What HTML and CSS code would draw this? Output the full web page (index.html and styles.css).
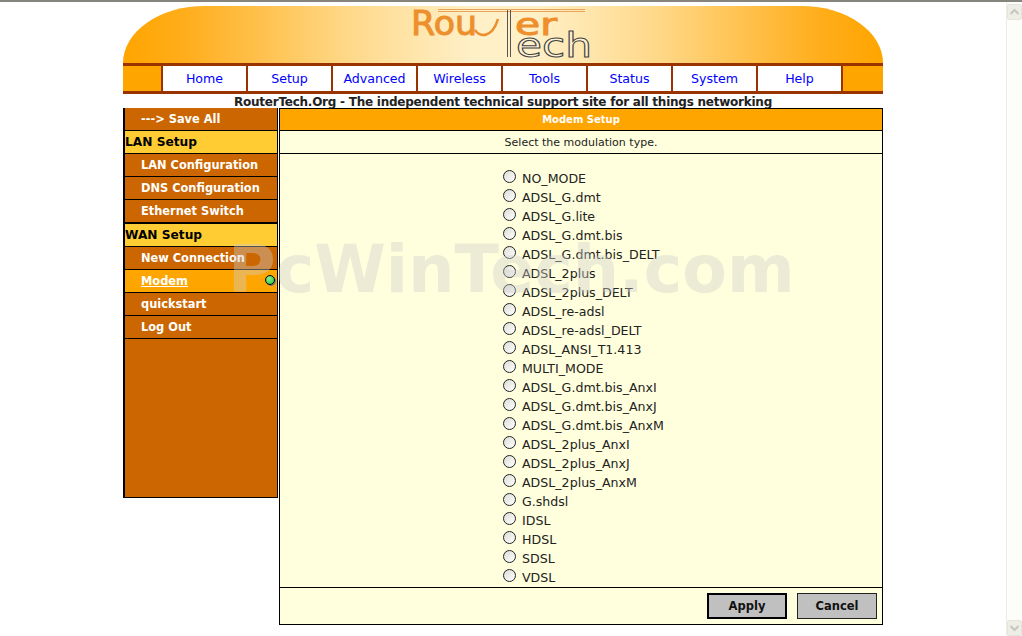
FILE: index.html
```html
<!DOCTYPE html>
<html>
  <head>
    <meta charset="utf-8" />
    <title>RouterTech - Modem Setup</title>
    <link rel="stylesheet" href="styles.css">
  </head>
  <body>
    <div class="window-edge"></div>
    <div class="window">
      <div class="page">
        <header class="banner">
          <svg class="logo" width="190" height="57" viewBox="0 0 190 57" role="img" aria-label="RouterTech">
            <text class="logo-orange" x="3" y="29" textLength="66" lengthAdjust="spacingAndGlyphs">Rou</text>
            <path d="M67 24C71 31 84 33 90 13" fill="none" stroke="#ee8f2d" stroke-width="2.600" />
            <text class="logo-orange small" x="107" y="29" textLength="42" lengthAdjust="spacingAndGlyphs">er</text>
            <rect x="30" y="3" width="147" height="1" fill="#e9a45c" />
            <rect x="30" y="5" width="147" height="1" fill="#e9a45c" />
            <rect x="99" y="4" width="1" height="47" fill="#555" />
            <rect x="102" y="4" width="1" height="47" fill="#555" />
            <text class="logo-dark" x="108" y="51" textLength="76" lengthAdjust="spacingAndGlyphs">ech</text>
          </svg>
        </header>
        <nav class="topnav">
          <span class="topnav-end"></span>
          <a href="#">Home</a>
          <a href="#">Setup</a>
          <a href="#">Advanced</a>
          <a href="#">Wireless</a>
          <a href="#">Tools</a>
          <a href="#">Status</a>
          <a href="#">System</a>
          <a href="#">Help</a>
          <span class="topnav-end last"></span>
        </nav>
        <div class="tagline">RouterTech.Org - The independent technical support site for all things networking</div>
        <div class="columns">
          <aside class="sidebar">
            <a class="side-link" href="#">---&gt; Save All</a>
            <div class="side-head">LAN Setup</div>
            <a class="side-link" href="#">LAN Configuration</a>
            <a class="side-link" href="#">DNS Configuration</a>
            <a class="side-link" href="#">Ethernet Switch</a>
            <div class="side-head second">WAN Setup</div>
            <a class="side-link" href="#">New Connection</a>
            <a class="side-link current" href="#">Modem<span class="dot"></span></a>
            <a class="side-link" href="#">quickstart</a>
            <a class="side-link" href="#">Log Out</a>
          </aside>
          <main class="panel">
            <div class="panel-title">Modem Setup</div>
            <div class="panel-note">Select the modulation type.</div>
            <form class="modes">
              <label><input type="radio" name="mode" />NO_MODE</label>
              <label><input type="radio" name="mode" />ADSL_G.dmt</label>
              <label><input type="radio" name="mode" />ADSL_G.lite</label>
              <label><input type="radio" name="mode" />ADSL_G.dmt.bis</label>
              <label><input type="radio" name="mode" />ADSL_G.dmt.bis_DELT</label>
              <label><input type="radio" name="mode" />ADSL_2plus</label>
              <label><input type="radio" name="mode" />ADSL_2plus_DELT</label>
              <label><input type="radio" name="mode" />ADSL_re-adsl</label>
              <label><input type="radio" name="mode" />ADSL_re-adsl_DELT</label>
              <label><input type="radio" name="mode" />ADSL_ANSI_T1.413</label>
              <label><input type="radio" name="mode" />MULTI_MODE</label>
              <label><input type="radio" name="mode" />ADSL_G.dmt.bis_AnxI</label>
              <label><input type="radio" name="mode" />ADSL_G.dmt.bis_AnxJ</label>
              <label><input type="radio" name="mode" />ADSL_G.dmt.bis_AnxM</label>
              <label><input type="radio" name="mode" />ADSL_2plus_AnxI</label>
              <label><input type="radio" name="mode" />ADSL_2plus_AnxJ</label>
              <label><input type="radio" name="mode" />ADSL_2plus_AnxM</label>
              <label><input type="radio" name="mode" />G.shdsl</label>
              <label><input type="radio" name="mode" />IDSL</label>
              <label><input type="radio" name="mode" />HDSL</label>
              <label><input type="radio" name="mode" />SDSL</label>
              <label><input type="radio" name="mode" />VDSL</label>
            </form>
            <div class="panel-foot">
              <button class="btn default" type="button">Apply</button>
              <button class="btn" type="button">Cancel</button>
            </div>
          </main>
        </div>
        <div class="watermark">PcWinTech.com</div>
      </div>
      <div class="scrollbar">
        <span class="scroll-btn">
          <svg width="11" height="8" viewBox="0 0 11 8"><path d="M1.500 6 5.500 2 9.500 6" fill="none" stroke="#c4c8b8" stroke-width="2" /></svg>
        </span>
        <span class="scroll-btn">
          <svg width="11" height="8" viewBox="0 0 11 8"><path d="M1.500 2 5.500 6 9.500 2" fill="none" stroke="#c4c8b8" stroke-width="2" /></svg>
        </span>
      </div>
    </div>
  </body>
</html>
```

FILE: styles.css
```css
html,
body {
  margin: 0;
  height: 100%;
  overflow: hidden;
  background-color: #fff;
  font-family: "DejaVu Sans", sans-serif;
}

.window-edge {
  height: 2px;
  background-color: #85857d;
}

.window {
  display: flex;
  height: 634px;
}

.page {
  position: relative;
  width: 760px;
  padding: 4px 123px 0;
}

.banner {
  display: flex;
  justify-content: center;
  height: 57px;
  border-radius: 82px 82px 0 0 / 57px 57px 0 0;
  background: linear-gradient(90deg, #ffa500 0, #ffad1a 8%, #ffd98a 30%, #fff0c8 46%, #fff0c8 54%, #ffd98a 70%, #ffad1a 92%, #ffa500 100%);
}

.logo text {
  font-family: "DejaVu Sans", sans-serif;
}

.logo-orange {
  font-size: 33px;
  fill: #ee8f2d;
  stroke: #ee8f2d;
  stroke-width: 1;
}

.logo-orange.small {
  font-size: 31px;
}

.logo-dark {
  font-size: 34px;
  fill: #fff3d2;
  stroke: #444;
  stroke-width: 1;
}

.topnav {
  display: flex;
  height: 25px;
  border-top: 3px solid #993300;
  border-bottom: 3px solid #993300;
  background-color: #ffa500;
}

.topnav a {
  width: 83px;
  border-left: 2px solid #993300;
  background-color: #fff;
  color: #0000ff;
  font-size: 12.6px;
  line-height: 25px;
  text-align: center;
  text-decoration: none;
}

.topnav-end {
  width: 38px;
}

.topnav-end.last {
  width: 40px;
  border-left: 2px solid #993300;
}

.tagline {
  height: 14px;
  color: #222;
  font-size: 12px;
  font-weight: bold;
  letter-spacing: -0.24px;
  line-height: 16px;
  text-align: center;
  white-space: nowrap;
}

.columns {
  display: flex;
  align-items: flex-start;
}

.sidebar {
  display: flex;
  flex-direction: column;
  box-sizing: border-box;
  width: 155px;
  height: 390px;
  margin-right: 1px;
  border-left: 2px solid #000;
  border-right: 1px solid #000;
  border-bottom: 1px solid #000;
  background-color: #cc6600;
}

.side-link,
.side-head {
  height: 22px;
  border-bottom: 1px solid #000;
  line-height: 22px;
  white-space: nowrap;
}

.side-link {
  position: relative;
  padding-left: 16px;
  color: #fff;
  font-size: 11.4px;
  font-weight: bold;
  text-decoration: none;
}

.side-link.current {
  background-color: #ffa500;
  text-decoration: underline;
}

.side-head {
  background-color: #ffcc33;
  color: #000;
  font-size: 12.2px;
  font-weight: bold;
}

.side-head.second {
  border-top: 1px solid #000;
}

.dot {
  position: absolute;
  top: 5px;
  right: 2px;
  box-sizing: border-box;
  width: 10px;
  height: 10px;
  border: 1px solid #000;
  border-radius: 50%;
  background: radial-gradient(circle at 40% 35%, #8cf08c, #1fc03c);
  box-shadow: 1px 1px 0 #6a7a8a;
}

.panel {
  box-sizing: border-box;
  display: flex;
  flex-direction: column;
  width: 604px;
  height: 517px;
  border: 1px solid #000;
  background-color: #ffffdd;
}

.panel-title {
  height: 21px;
  border-bottom: 1px solid #000;
  background-color: #ffa500;
  color: #fff;
  font-size: 10px;
  font-weight: bold;
  line-height: 21px;
  text-align: center;
}

.panel-note {
  height: 22px;
  border-bottom: 1px solid #000;
  color: #222;
  font-size: 11px;
  line-height: 24px;
  text-align: center;
}

.modes {
  display: flex;
  flex-direction: column;
  align-items: center;
  flex: 1;
  padding-top: 15px;
}

.modes label {
  display: flex;
  align-items: center;
  align-self: center;
  width: 158px;
  height: 19px;
  color: #222;
  font-size: 12.6px;
  white-space: nowrap;
}

.modes input {
  appearance: none;
  flex: none;
  box-sizing: border-box;
  width: 13px;
  height: 13px;
  margin: -4px 6px 0 1px;
  border: 1.5px solid #222;
  border-radius: 50%;
  background: linear-gradient(135deg, #dcdcd6, #fff);
}

.panel-foot {
  display: flex;
  justify-content: flex-end;
  gap: 10px;
  height: 37px;
  box-sizing: border-box;
  padding: 5px 5px 0;
  border-top: 1px solid #000;
}

.btn {
  box-sizing: border-box;
  width: 80px;
  height: 26px;
  padding: 0;
  border: 1px solid #222;
  border-radius: 0;
  background-color: #c0c0c0;
  color: #111;
  font-family: "DejaVu Sans", sans-serif;
  font-size: 11.5px;
  font-weight: bold;
}

.btn.default {
  border: 2px solid #000;
}

.watermark {
  position: absolute;
  top: 233px;
  left: 228px;
  color: rgba(205, 205, 205, 0.4);
  font-size: 65px;
  font-weight: bold;
  line-height: 70px;
  white-space: nowrap;
  pointer-events: none;
}

.scrollbar {
  display: flex;
  flex-direction: column;
  justify-content: space-between;
  box-sizing: border-box;
  width: 16px;
  margin-left: auto;
  padding: 2px 0 0 0;
  border-left: 1px solid #ededE5;
  background-color: #fdfdfa;
}

.scroll-btn {
  display: flex;
  align-items: center;
  justify-content: center;
  height: 14px;
  border: 1px solid #e4e6dc;
  border-radius: 2px;
  background-color: #eeeee6;
}
```
